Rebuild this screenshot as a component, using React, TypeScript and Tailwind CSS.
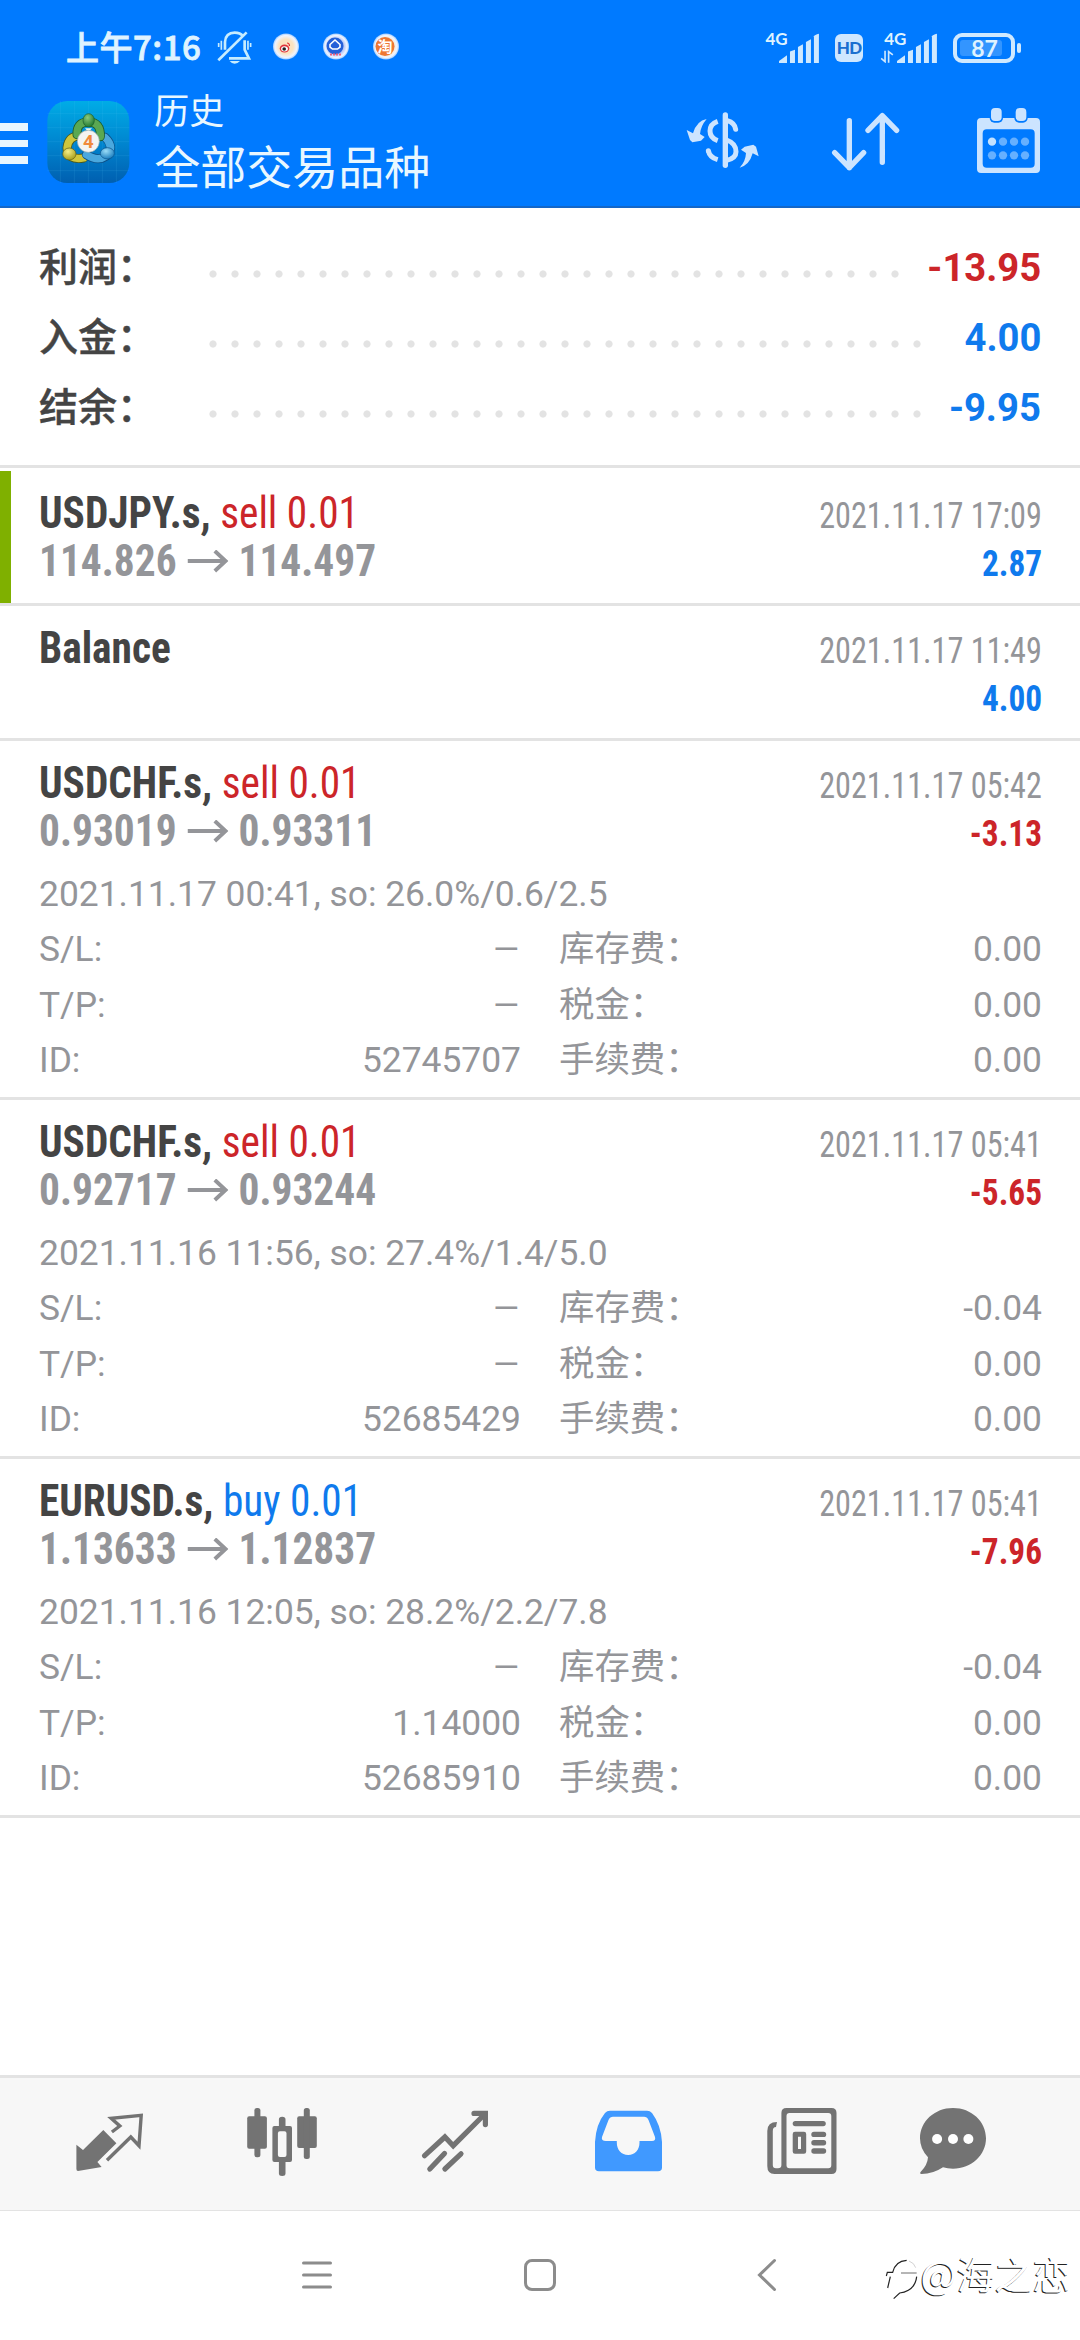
import React from "react";

const CONDENSED = "font-['Roboto_Condensed','Roboto','Noto_Sans_CJK_SC',sans-serif] [font-stretch:75%]";

function SignalBars() {
  return (
    <svg viewBox="414 96 122 92" className="h-[30.6px] w-[40.6px]" fill="#cfe9ff">
      <path d="M414 186V180L438 163V186Z" />
      <path d="M447 186V152L462 146V186Z" />
      <path d="M471 186V138L486 130V186Z" />
      <path d="M495 186V123L510 115V186Z" />
      <path d="M519 186V106Q521 101 534 98V186Z" />
    </svg>
  );
}

function NotificationDot({ kind }: { kind: "weibo" | "bank" | "taobao" }) {
  return (
    <svg viewBox="0 0 28 28" className="size-7">
      <defs>
        <radialGradient id={`glow-${kind}`}>
          <stop offset="0.55" stopColor={kind === "bank" ? "#a9bdf6" : "#fbe3c0"} />
          <stop offset="0.85" stopColor="#eef4ff" />
          <stop offset="1" stopColor="#9fcbff" />
        </radialGradient>
      </defs>
      <circle cx="14" cy="13.5" r="13" fill={`url(#glow-${kind})`} />
      {kind === "weibo" && (
        <>
          <ellipse cx="12.5" cy="15.5" rx="4.8" ry="4" fill="#e0333a" />
          <ellipse cx="12.5" cy="15.8" rx="3.4" ry="2.6" fill="#fff" />
          <circle cx="12.2" cy="16" r="1.8" fill="#222" />
          <path d="M15 10q2.5 0 2.5 3" fill="none" stroke="#e0333a" strokeWidth="1.2" />
        </>
      )}
      {kind === "bank" && (
        <>
          <circle cx="13" cy="13" r="8.5" fill="#2560d8" />
          <path d="M8 11.5l5-4.5 5 4.5v2.5l-2.5 2h-5l-2.5-2z" fill="none" stroke="#fff" strokeWidth="1.6" />
          <path d="M8 21.5h11" stroke="#f0607a" strokeWidth="2" strokeDasharray="2 1" />
        </>
      )}
      {kind === "taobao" && (
        <>
          <circle cx="13" cy="13.5" r="9.5" fill="#ee7733" />
          <text x="13" y="19" textAnchor="middle" fontSize="15" fontWeight="700" fill="#fff" fontFamily="Noto Sans CJK SC">淘</text>
        </>
      )}
    </svg>
  );
}

function StatusBar() {
  return (
    <div className="flex h-[93px] items-center pt-[3px] pr-[59px] pl-[66px] text-[#dff3ff]">
      <span className="-mt-[4px] w-[135px] font-['Noto_Sans_CJK_SC',sans-serif] text-[33px] leading-none font-medium tracking-[0.5px] whitespace-nowrap [-webkit-text-stroke:0.8px_#dff3ff]">
        上午7:16
      </span>
      <svg viewBox="652 94 106 100" className="ml-[16px] h-[33.3px] w-[35.3px]" fill="none" stroke="#c6ecff" strokeWidth="8">
        <path d="M676 150V127Q678 99 705 99Q722 99 730 110M735 122V150L748 176H688" />
        <path d="M741 98L656 182" />
        <path d="M657 130V142M665 123V150M745 123V150M753 130V142" strokeWidth="5" />
        <path d="M690 184H721Q714 192 705 192T690 184Z" fill="#c6ecff" stroke="none" />
      </svg>
      <div className="-mt-[3px] ml-[20px] flex gap-[22px]">
        <NotificationDot kind="weibo" />
        <NotificationDot kind="bank" />
        <NotificationDot kind="taobao" />
      </div>
      <div className="ml-auto flex items-center">
        <div className="flex">
          <span className="-mr-[9px] -mt-[3px] font-['Lato',sans-serif] text-[17px] leading-[18px] font-bold">4G</span>
          <SignalBars />
        </div>
        <div className="ml-[16px] flex h-[28px] w-[28px] items-center justify-center rounded-[6px] bg-[#cfe7ff] font-['Lato',sans-serif] text-[17px] font-black tracking-[-0.5px] text-[#1a6fd0]">
          HD
        </div>
        <div className="ml-[17px] flex">
          <div className="-mr-[9px] flex flex-col">
            <span className="-mt-[3px] ml-[4px] font-['Lato',sans-serif] text-[17px] leading-[18px] font-bold">4G</span>
            <svg viewBox="716 148 42 40" className="mt-[2px] h-[13px] w-[14px]" fill="none" stroke="#cfe9ff" strokeWidth="5">
              <path d="M731 150V184L719 174M742 187V153L755 163" />
            </svg>
          </div>
          <SignalBars />
        </div>
        <div className="ml-[15px] flex items-center gap-[2px]">
          <div className="flex h-[30px] w-[62px] items-center rounded-[9px] border-4 border-[#cfe9ff] pl-[3px]">
            <div className="flex h-[16px] w-[42px] items-center justify-center rounded-[3px] bg-[#3395ff] pl-[7px] font-['Lato',sans-serif] text-[23px] font-bold">
              87
            </div>
          </div>
          <div className="h-[10px] w-[4px] rounded-sm bg-[#cfe9ff]" />
        </div>
      </div>
    </div>
  );
}

function AppIcon() {
  return (
    <svg viewBox="140 303 248 246" className="h-[82px] w-[82.7px]">
      <defs>
        <linearGradient id="tile" x1="0" y1="0" x2="0" y2="1">
          <stop offset="0" stopColor="#00ace6" />
          <stop offset="0.5" stopColor="#0086d0" />
          <stop offset="1" stopColor="#005fb0" />
        </linearGradient>
        <radialGradient id="green" cx="0.4" cy="0.3" r="0.7">
          <stop offset="0" stopColor="#8cc97c" />
          <stop offset="1" stopColor="#1f7a30" />
        </radialGradient>
        <radialGradient id="yellow" cx="0.4" cy="0.3" r="0.7">
          <stop offset="0" stopColor="#f6ee86" />
          <stop offset="1" stopColor="#a89f1c" />
        </radialGradient>
        <radialGradient id="blue" cx="0.4" cy="0.3" r="0.7">
          <stop offset="0" stopColor="#9adcf7" />
          <stop offset="1" stopColor="#1c7fc0" />
        </radialGradient>
      </defs>
      <rect x="141" y="303" width="246" height="246" rx="60" fill="url(#tile)" />
      <path d="M180 303V549M222 303V549M264 303V549M306 303V549M348 303V549M141 341H387M141 383H387M141 425H387M141 467H387M141 512H387" stroke="#58c4ef" strokeOpacity="0.2" strokeWidth="2" />
      <g fill="none" strokeLinecap="round">
        <path d="M250 474Q202 482 200 444Q204 408 238 407" stroke="#4c5a1a" strokeWidth="27" />
        <path d="M250 474Q202 482 200 444Q204 408 238 407" stroke="#cfc63c" strokeWidth="22" />
        <path d="M314 412Q344 440 318 468Q292 486 258 464" stroke="#0b4f86" strokeWidth="27" />
        <path d="M314 412Q344 440 318 468Q292 486 258 464" stroke="#4aa8de" strokeWidth="22" />
        <path d="M230 404Q228 366 264 366Q302 366 300 410" stroke="#1d5c2c" strokeWidth="27" />
        <path d="M230 404Q228 366 264 366Q302 366 300 410" stroke="#5aa852" strokeWidth="22" />
        <path d="M254 385H275L264 396Z" fill="#e8f5e8" stroke="none" />
      </g>
      <ellipse cx="265" cy="361" rx="17" ry="20" fill="url(#green)" stroke="#1d5c2c" strokeWidth="2" />
      <ellipse cx="207" cy="462" rx="20" ry="18" fill="url(#yellow)" stroke="#5d5a16" strokeWidth="2" />
      <ellipse cx="321" cy="460" rx="21" ry="17" fill="url(#blue)" stroke="#0b4f86" strokeWidth="2" />
      <circle cx="264" cy="424" r="33" fill="#f4f4f2" stroke="#9aa" strokeWidth="2" />
      <text x="264" y="444" textAnchor="middle" fontFamily="Roboto" fontWeight="700" fontSize="56" fill="#f08a3c">4</text>
    </svg>
  );
}

function Header() {
  return (
    <div className="flex h-[115px] items-start border-b-2 border-[#1467c8]">
      <div className="mt-[30px] flex w-[28px] flex-col gap-[9px]">
        <div className="h-[7.5px] bg-[#e8f6ff]" />
        <div className="h-[7.5px] bg-[#e8f6ff]" />
        <div className="h-[7.5px] bg-[#e8f6ff]" />
      </div>
      <div className="mt-[8px] ml-[19px]">
        <AppIcon />
      </div>
      <div className="-mt-[2px] ml-[24.5px] flex flex-col font-['Noto_Sans_CJK_SC',sans-serif] whitespace-nowrap text-[#e9f7ff]">
        <span className="text-[35px] leading-[36px]">历史</span>
        <span className="mt-[8.5px] text-[46px] leading-[56px]">全部交易品种</span>
      </div>
      <div className="mt-[13px] ml-auto flex pr-[38px]">
        <svg viewBox="130 318 240 210" className="h-[70px] w-[80px]" fill="none" stroke="#cce4ff" strokeWidth="15">
          <path d="M254 345V496" strokeWidth="16" strokeLinecap="round" />
          <path d="M260 362Q282 368 285 388" strokeLinecap="round" />
          <path d="M258 420Q286 430 286 455Q286 474 258 481" />
          <path d="M231 364Q208 372 208 393Q208 414 231 422" />
          <path d="M203 452Q207 472 231 479" />
          <circle cx="203" cy="452" r="7.5" fill="#cce4ff" stroke="none" />
          <path d="M138 390L157 400Q168 362 198 357Q180 378 178 402L192 411L181 422L155 427L148 420Z" fill="#cce4ff" stroke="none" />
          <path d="M354 469L336 460Q326 496 297 503Q315 484 316 459L301 449L312 440L338 434L346 440Z" fill="#cce4ff" stroke="none" />
        </svg>
        <svg viewBox="565 318 220 210" className="ml-[65px] h-[70px] w-[73.3px]" fill="none" stroke="#cce4ff" strokeWidth="16" strokeLinecap="round" strokeLinejoin="round">
          <path d="M626 362V503M582 458L626 503L669 458M725 487V347M682 391L725 347L768 391" />
        </svg>
        <svg viewBox="1005 318 200 210" className="ml-[73.3px] h-[70px] w-[66.7px]">
          <path fillRule="evenodd" fill="#cce4ff" d="M1023 354H1188Q1200 354 1200 366V507Q1200 519 1188 519H1023Q1011 519 1011 507V366Q1011 354 1023 354ZM1040 388Q1028 388 1028 400V491Q1028 503 1040 503H1172Q1184 503 1184 491V400Q1184 388 1172 388Z" />
          <rect x="1049" y="318" width="40" height="50" rx="14" fill="#007aff" />
          <rect x="1123" y="318" width="40" height="50" rx="14" fill="#007aff" />
          <rect x="1053" y="324" width="32" height="39" rx="12" fill="#cce4ff" />
          <rect x="1127" y="324" width="32" height="39" rx="12" fill="#cce4ff" />
          {[1056, 1089, 1122, 1155].map((x) => (
            <g key={x}>
              <circle cx={x} cy="425" r="12.5" fill={x === 1056 ? "#c4e2ff" : "#66b0ff"} />
              <circle cx={x} cy="466" r="12.5" fill="#66b0ff" />
            </g>
          ))}
        </svg>
      </div>
    </div>
  );
}

function SummaryRow({ label, value, color, dots }: { label: string; value: string; color: string; dots: string }) {
  return (
    <div className="flex h-[70px] justify-between leading-[70px]">
      <div className="flex items-start">
        <span className="-mt-[4px] w-[163px] font-['Noto_Sans_CJK_SC',sans-serif] text-[39px] font-medium whitespace-nowrap text-[#444] [-webkit-text-stroke:0.4px_#444]">
          {label}
        </span>
        <span className={`mt-[37px] h-2 bg-[radial-gradient(circle,#e3e3e3_3.2px,transparent_4px)] bg-[length:22px_8px] ${dots}`} />
      </div>
      <span className={`origin-right scale-x-[0.98] font-['Roboto',sans-serif] text-[39px] font-bold ${color}`}>{value}</span>
    </div>
  );
}

type Deal = {
  symbol: string;
  side?: "sell" | "buy";
  open?: string;
  close?: string;
  time: string;
  profit: string;
  comment?: string;
  details?: [string, string, string, string][];
  marked?: boolean;
};

const deals: Deal[] = [
  { symbol: "USDJPY.s", side: "sell", open: "114.826", close: "114.497", time: "2021.11.17 17:09", profit: "2.87", marked: true },
  { symbol: "Balance", time: "2021.11.17 11:49", profit: "4.00" },
  {
    symbol: "USDCHF.s", side: "sell", open: "0.93019", close: "0.93311", time: "2021.11.17 05:42", profit: "-3.13",
    comment: "2021.11.17 00:41, so: 26.0%/0.6/2.5",
    details: [["S/L:", "–", "库存费：", "0.00"], ["T/P:", "–", "税金：", "0.00"], ["ID:", "52745707", "手续费：", "0.00"]],
  },
  {
    symbol: "USDCHF.s", side: "sell", open: "0.92717", close: "0.93244", time: "2021.11.17 05:41", profit: "-5.65",
    comment: "2021.11.16 11:56, so: 27.4%/1.4/5.0",
    details: [["S/L:", "–", "库存费：", "-0.04"], ["T/P:", "–", "税金：", "0.00"], ["ID:", "52685429", "手续费：", "0.00"]],
  },
  {
    symbol: "EURUSD.s", side: "buy", open: "1.13633", close: "1.12837", time: "2021.11.17 05:41", profit: "-7.96",
    comment: "2021.11.16 12:05, so: 28.2%/2.2/7.8",
    details: [["S/L:", "–", "库存费：", "-0.04"], ["T/P:", "1.14000", "税金：", "0.00"], ["ID:", "52685910", "手续费：", "0.00"]],
  },
];

function DealRow({ deal }: { deal: Deal }) {
  const profitColor = deal.profit.startsWith("-") ? "text-[#cc2529]" : "text-[#0f7aed]";
  return (
    <div className={`border-b-[3px] border-[#e3e3e3] ${deal.details ? "h-[359px]" : "h-[135px]"}`}>
      <div className={`h-full border-l-[11px] pt-[19px] pr-[38px] pl-[28px] ${deal.marked ? "border-[#7fb000]" : "border-transparent"}`}>
        <div className={`flex h-12 items-baseline justify-between leading-[48px] ${CONDENSED}`}>
          <span className="origin-left scale-x-[0.95] text-[43.5px] whitespace-pre">
            <span className="font-bold text-[#444]">{deal.symbol}{deal.side ? ", " : ""}</span>
            <span className={deal.side === "buy" ? "text-[#0f7aed]" : "text-[#cc2529]"}>{deal.side ? `${deal.side} 0.01` : ""}</span>
          </span>
          <span className="origin-right scale-x-[0.895] text-[36px] text-[#949599]">{deal.time}</span>
        </div>
        <div className={`flex h-12 items-baseline justify-between leading-[48px] font-bold ${CONDENSED}`}>
          <span className="flex origin-left scale-x-[0.952] items-baseline text-[43.5px] text-[#949599]">
            {deal.open ?? "\u00a0"}
            {deal.open && (
              <svg viewBox="0 0 42 24" className="mx-[11px] h-[24px] w-[43px] self-center" preserveAspectRatio="none" fill="none" stroke="#949599" strokeWidth="4">
                <path d="M0 11H39M28 1L39 11L28 21" />
              </svg>
            )}
            {deal.close}
          </span>
          <span className={`origin-right scale-x-[0.925] text-[36px] ${profitColor}`}>{deal.profit}</span>
        </div>
        {deal.details && (
          <div className="mt-[10.5px] grid grid-cols-[100px_382px_1fr_1fr] font-['Roboto','Noto_Sans_CJK_SC',sans-serif] text-[35.4px] leading-[55.6px] whitespace-nowrap text-[#949599]">
            <span className="col-span-4">{deal.comment}</span>
            {deal.details.map(([a, b, c, d]) => (
              <React.Fragment key={a}>
                <span>{a}</span>
                <span className={b === "–" ? "origin-right scale-x-125 text-right" : "text-right"}>{b}</span>
                <span className="pl-[38px]">{c}</span>
                <span className="text-right">{d}</span>
              </React.Fragment>
            ))}
          </div>
        )}
      </div>
    </div>
  );
}

function TabBar() {
  const g = "#737373";
  return (
    <div className="grid h-[136px] grid-cols-[repeat(5,173px)_132px] items-center justify-items-center border-t-[3px] border-b border-[#e3e3e3] bg-[#f7f7f7] pl-[22px]">
      <svg viewBox="0 0 80 80" className="size-20" fill={g}>
        <path d="M7.4 40.7L14 46L34.3 26L47.4 39.3L28.4 58L32.6 63L9 67Q7.4 67 7.4 65Z" />
        <path d="M42.9 28L50.8 22L42.2 14.3L72.2 11.3L70 41.7L61.8 33L38 56.3" fill="none" stroke={g} strokeWidth="3.4" />
      </svg>
      <svg viewBox="0 0 80 80" className="size-20" fill={g}>
        <rect x="5.2" y="12.3" width="19.7" height="32.4" rx="2" />
        <rect x="12.4" y="4" width="6" height="49.3" rx="2.5" />
        <path fillRule="evenodd" d="M32.4 22H48Q50 22 50 24V56Q50 58 48 58H32.4Q30.4 58 30.4 56V24Q30.4 22 32.4 22ZM37.9 27.3Q35.9 27.3 35.9 29.3V51Q35.9 53 37.9 53H42.5Q44.5 53 44.5 51V29.3Q44.5 27.3 42.5 27.3Z" />
        <path d="M36.9 23V15.5Q36.9 12.7 40.2 12.7T43.5 15.5V23ZM36.9 57V69.5Q36.9 72 40.2 72T43.5 69.5V57Z" />
        <rect x="55.2" y="12.3" width="19.6" height="31.7" rx="2" />
        <rect x="61.8" y="4" width="6" height="51" rx="2.5" />
      </svg>
      <svg viewBox="0 0 80 80" className="size-20" fill="none" stroke={g} strokeWidth="5.2" strokeLinecap="round">
        <path d="M9.6 51.7L29.9 33L38.2 41.7L69.9 10" />
        <path d="M59 9.4H70.4V20.6" />
        <path d="M14.8 65L29.5 49.5M29.9 65L46 49.8" />
      </svg>
      <svg viewBox="0 0 80 80" className="size-20" fill="#4099ff">
        <path fillRule="evenodd" d="M7 38Q8 20 17 9Q19 6.7 22 6.7H59Q62 6.7 64 9Q73 21 74 38V63.5Q74 67.3 70 67.3H11Q7 67.3 7 63.5ZM25 12.7H56Q59 12.7 60.5 16L67 33Q68 37 64 37H51.5V38.5C51.5 46 47 51 40.2 51S28.8 46 28.8 38.5V37H18Q13 37 14 33L20.5 16Q22 12.7 25 12.7Z" />
      </svg>
      <svg viewBox="0 0 80 80" className="size-20" fill={g}>
        <path fillRule="evenodd" d="M25.4 4H70.5Q75.5 4 75.5 9V65Q75.5 70 70.5 70H13.5Q6.3 70 6.3 62V27Q6.3 18 16 18L15 23Q11.8 23 11.8 27V61Q11.8 64.3 15 64.3H17Q20.4 64.3 20.4 61V9Q20.4 4 25.4 4ZM28.5 9Q25.5 9 25.5 12V61.3Q25.5 64.3 28.5 64.3H67.3Q70.3 64.3 70.3 61.3V12Q70.3 9 67.3 9Z" />
        <rect x="31.7" y="17" width="33.1" height="5.2" rx="2.6" />
        <path fillRule="evenodd" d="M34 27.7H43Q45.2 27.7 45.2 30V47.5Q45.2 49.7 43 49.7H34Q31.7 49.7 31.7 47.5V30Q31.7 27.7 34 27.7ZM37 32.7V45H40V32.7Z" />
        <rect x="50.3" y="27.7" width="14.9" height="5.4" rx="2.7" />
        <rect x="50.3" y="36" width="14.9" height="5.4" rx="2.7" />
        <rect x="50.3" y="44.3" width="14.9" height="5.4" rx="2.7" />
      </svg>
      <svg viewBox="0 0 80 80" className="size-20" fill={g}>
        <path d="M40 4C58.5 4 73 17.5 73 34.3S58.5 64.7 40 64.7Q34.5 64.7 30 63.3Q20 70 8.5 70Q6 69.5 8 67.5Q14.5 61 15 53.3Q7 45 7 34.3C7 17.5 21.5 4 40 4Z" />
        <circle cx="24.1" cy="35" r="5" fill="#fff" />
        <circle cx="40" cy="35" r="5" fill="#fff" />
        <circle cx="55.4" cy="35" r="5" fill="#fff" />
      </svg>
    </div>
  );
}

function SystemNav() {
  return (
    <div className="flex h-[129px] items-center pb-[2px] pl-[300px]">
      <svg viewBox="0 0 34 34" className="size-[34px]" stroke="#8c8c8c" strokeWidth="3" strokeLinecap="round">
        <path d="M3.5 5H30.5M3.5 17H30.5M3.5 29H30.5" />
      </svg>
      <svg viewBox="0 0 34 34" className="ml-[189px] size-[34px]" fill="none" stroke="#8c8c8c" strokeWidth="3">
        <rect x="2.5" y="2.5" width="29" height="29" rx="6.5" />
      </svg>
      <svg viewBox="0 0 34 34" className="ml-[193px] size-[34px]" fill="none" stroke="#8c8c8c" strokeWidth="3" strokeLinecap="round">
        <path d="M24.5 2.5L9.5 17L24.5 31.5" />
      </svg>
      <div className="mt-[10px] ml-[101px] flex items-center">
        <svg viewBox="42 66 102 132" className="h-[44px] w-[34px]" fill="none" stroke="#222" strokeWidth="3.5">
          <path d="M46 120L49 109H65Q73 75 107 73" />
          <path d="M58 122L50 156" />
          <path d="M90 111H137" strokeWidth="2" />
          <path d="M114 75Q130 81 134 95" stroke="#bbb" strokeWidth="2" />
          <path d="M137 122Q134 150 112 163Q100 170 86 171L68 188" />
        </svg>
        <span className="mb-[13px] ml-[1.5px] font-['Noto_Sans_CJK_SC',sans-serif] text-[38px] leading-[44px] whitespace-nowrap text-white [text-shadow:-1px_1px_0_#222]">
          @海之恋
        </span>
      </div>
    </div>
  );
}

export default function App() {
  return (
    <div className="flex h-[2340px] w-[1080px] flex-col overflow-hidden bg-white">
      <div className="bg-[#007aff]">
        <StatusBar />
        <Header />
      </div>
      <div className="h-[260px] border-b-[3px] border-[#e3e3e3] pt-[25px] pr-[39px] pl-[39px]">
        <SummaryRow label="利润：" value="-13.95" color="text-[#cc2529]" dots="w-[704px]" />
        <SummaryRow label="入金：" value="4.00" color="text-[#0f7aed]" dots="w-[726px]" />
        <SummaryRow label="结余：" value="-9.95" color="text-[#0f7aed]" dots="w-[726px]" />
      </div>
      <div className="flex-1 pt-[3px]">
        {deals.map((deal, i) => (
          <DealRow key={i} deal={deal} />
        ))}
      </div>
      <TabBar />
      <SystemNav />
    </div>
  );
}
